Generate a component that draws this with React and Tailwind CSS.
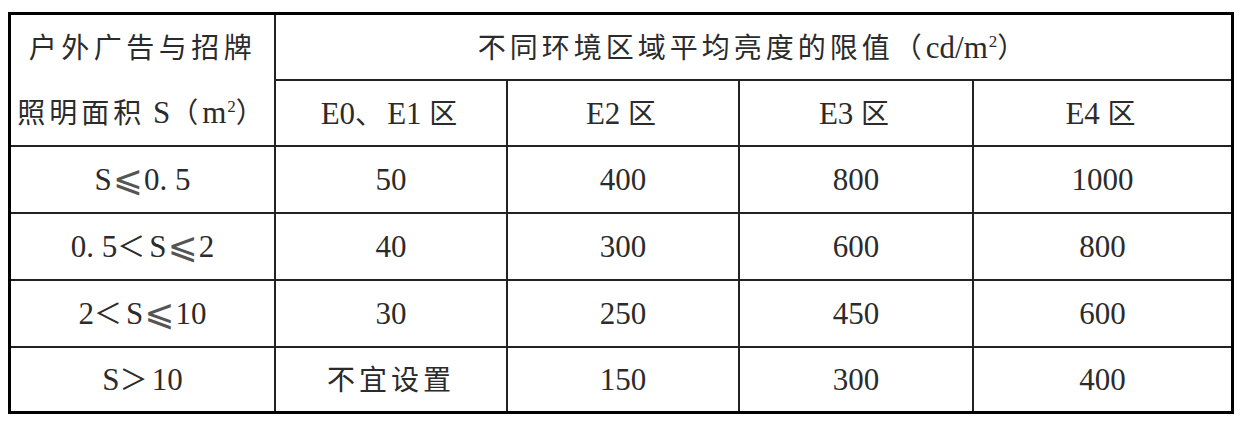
import React from 'react';

const cjk = "text-[28px] tracking-[4px]";
const le = <span className="font-['DejaVu_Sans',serif] text-[36px] leading-[0] text-[#555] relative top-[1px] mx-[1px]">⩽</span>;
const sup = <span className="text-[17px] relative -top-[11px] ml-[1px]">2</span>;

const rows = [
  { s: <>S{le}0. 5</>, v: ['50', '400', '800', '1000'] },
  { s: <>0. 5<span className={cjk}>＜</span>S{le}2</>, v: ['40', '300', '600', '800'] },
  { s: <>2<span className={cjk}>＜</span>S{le}10</>, v: ['30', '250', '450', '600'] },
  { s: <>S<span className={cjk}>＞</span>10</>, v: [<span className={cjk}>不宜设置</span>, '150', '300', '400'] },
];

const cell = "border-[#222] text-center align-middle p-0";

const App = () => {
  return (
    <div className="w-[1242px] h-[421px] bg-white pt-[12px] pl-[8px]">
      <div className="w-[1226px] border-[3px] border-black">
        <table className="table-fixed border-separate border-spacing-0 w-[1220px] text-[31px] leading-none text-[#2b2b2b] font-['Liberation_Serif','Noto_Sans_CJK_SC',serif]">
          <colgroup>
            <col className="w-[265px]" />
            <col className="w-[232px]" />
            <col className="w-[232px]" />
            <col className="w-[234px]" />
            <col className="w-[257px]" />
          </colgroup>
          <tbody>
            <tr className="h-[66px]">
              <td rowSpan={2} className={`${cell} border-r-2 border-b-2`}>
                <div className="flex flex-col items-center gap-[34px] pt-[2px]">
                  <span className="text-[28px] tracking-[4.5px]">户外广告与招牌</span>
                  <span>
                    <span className={cjk}>照明面积</span> S<span className={cjk}>（</span>m{sup}<span className={cjk}>）</span>
                  </span>
                </div>
              </td>
              <td colSpan={4} className={`${cell} border-b-2`}>
                <span className={cjk}>不同环境区域平均亮度的限值（</span>cd/m{sup}<span className={cjk}>）</span>
              </td>
            </tr>
            <tr className="h-[66px]">
              <td className={`${cell} border-r-2 border-b-2`}>
                E0<span className={cjk}>、</span>E1 <span className={cjk}>区</span>
              </td>
              <td className={`${cell} border-r-2 border-b-2`}>
                E2 <span className={cjk}>区</span>
              </td>
              <td className={`${cell} border-r-2 border-b-2`}>
                E3 <span className={cjk}>区</span>
              </td>
              <td className={`${cell} border-b-2`}>
                E4 <span className={cjk}>区</span>
              </td>
            </tr>
            {rows.map((r, i) => {
              const last = i === rows.length - 1;
              return (
                <tr key={i} className={last ? "h-[63px]" : "h-[67px]"}>
                  <td className={`${cell} border-r-2 ${last ? '' : 'border-b-2'}`}>{r.s}</td>
                  {r.v.map((v, j) => (
                    <td
                      key={j}
                      className={`${cell} ${j < 3 ? 'border-r-2' : ''} ${last ? '' : 'border-b-2'}`}
                    >
                      {v}
                    </td>
                  ))}
                </tr>
              );
            })}
          </tbody>
        </table>
      </div>
    </div>
  );
};

export default App;
